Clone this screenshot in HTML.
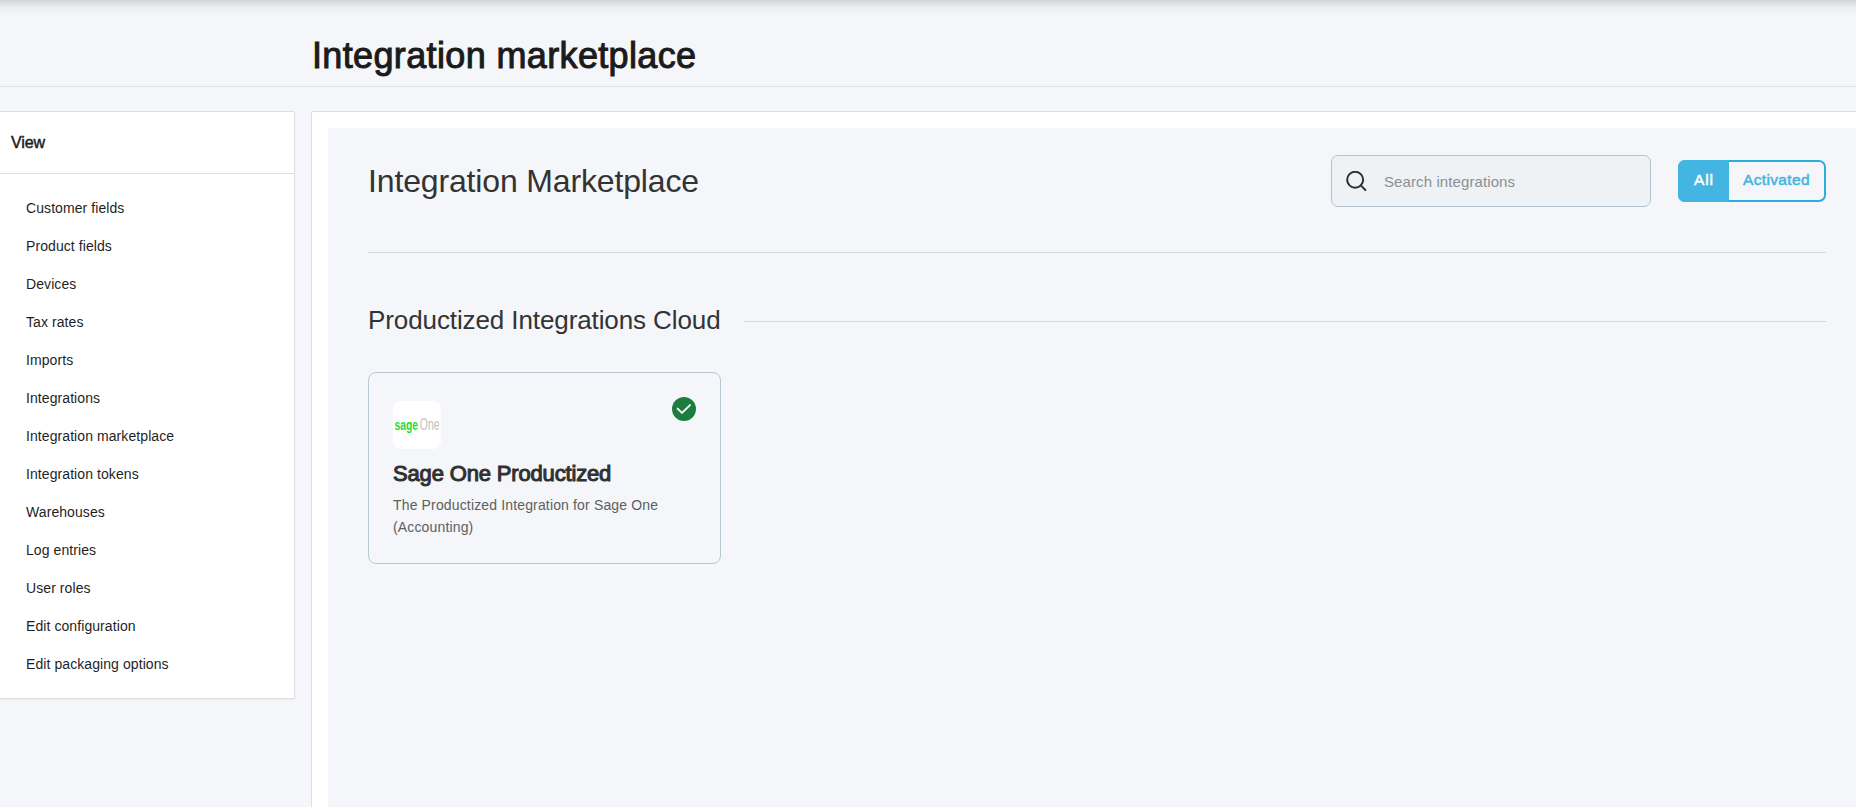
<!DOCTYPE html>
<html><head><meta charset="utf-8">
<style>
*{box-sizing:border-box;margin:0;padding:0}
html,body{width:1856px;height:807px;overflow:hidden}
body{background:#f4f6fa;font-family:"Liberation Sans",sans-serif;position:relative;color:#222}
.shadow{position:absolute;left:0;top:0;width:1856px;height:17px;background:linear-gradient(#d4d4d7 0px,#e2e3e7 4px,#eceef2 8px,#f1f3f7 12px,#f4f6fa 17px)}
.h1{position:absolute;left:312px;top:35px;font-size:36px;font-weight:normal;-webkit-text-stroke:1px #1b1b1b;color:#1b1b1b;white-space:nowrap;line-height:42px;letter-spacing:0.36px}
.hr1{position:absolute;left:0;top:86px;width:1856px;height:1px;background:#e1e2e4}
.side{position:absolute;left:-2px;top:111px;width:297px;height:588px;background:#fff;border:1px solid #dedede;border-radius:2px;box-shadow:0 1px 2px rgba(0,0,0,0.05)}
.view{position:absolute;left:11px;top:133px;font-size:16px;font-weight:normal;-webkit-text-stroke:0.45px #1b1b1b;color:#1b1b1b;line-height:20px;letter-spacing:-0.1px}
.sep{position:absolute;left:0;top:173px;width:294px;height:1px;background:#dedede}
.item{position:absolute;left:26px;margin-top:1px;font-size:14px;color:#1f1f1f;letter-spacing:0.08px;line-height:16px;white-space:nowrap}
.main{position:absolute;left:311px;top:111px;width:1600px;height:800px;background:#fff;border:1px solid #dedede;border-radius:2px}
.inner{position:absolute;left:328px;top:128px;width:1600px;height:700px;background:#f4f6fa}
.h2{position:absolute;left:368px;top:162px;font-size:32px;color:#333;white-space:nowrap;line-height:38px;letter-spacing:-0.15px}
.search{position:absolute;left:1331px;top:155px;width:320px;height:52px;background:#eff2f5;border:1px solid #b3c4ce;border-radius:7px}
.search .ph{position:absolute;left:52px;top:17px;font-size:15px;color:#8c8e90;letter-spacing:0.1px;line-height:18px;white-space:nowrap}
.tog{position:absolute;left:1678px;top:160px;width:148px;height:42px;border:2px solid #2badde;border-radius:7px;background:transparent;overflow:hidden}
.all{position:absolute;left:1678px;top:160px;width:51px;height:42px;background:#43b5e2;border-radius:7px 0 0 7px}
.btxt{position:absolute;top:170px;font-size:15.5px;line-height:20px;font-weight:normal;white-space:nowrap}
.hr2{position:absolute;left:368px;top:252px;width:1458px;height:1px;background:#d0d9df}
.h3{position:absolute;left:368px;top:305px;letter-spacing:-0.1px;font-size:26px;color:#333;white-space:nowrap;line-height:30px}
.hr3{position:absolute;left:744px;top:321px;width:1082px;height:1px;background:#d0d9df}
.card{position:absolute;left:368px;top:372px;width:353px;height:192px;border:1px solid #b8c9d2;border-radius:8px;background:#f4f6fa}
.logo{position:absolute;left:393px;top:401px;width:48px;height:48px;background:#fff;border-radius:8px}
.check{position:absolute;left:672px;top:397px;width:24px;height:24px}
.ctitle{position:absolute;left:393px;top:461px;letter-spacing:-0.16px;font-size:22px;font-weight:normal;-webkit-text-stroke:1.05px #313131;color:#313131;white-space:nowrap;line-height:26px}
.cdesc{position:absolute;left:393px;top:494px;letter-spacing:0.15px;font-size:14px;color:#5e5e5e;line-height:22px;width:300px}
</style></head><body>
<div class="shadow"></div>
<div class="h1">Integration marketplace</div>
<div class="hr1"></div>
<div class="side"></div>
<div class="view">View</div>
<div class="sep"></div>
<div class="item" style="top:199px">Customer fields</div>
<div class="item" style="top:237px">Product fields</div>
<div class="item" style="top:275px">Devices</div>
<div class="item" style="top:313px">Tax rates</div>
<div class="item" style="top:351px">Imports</div>
<div class="item" style="top:389px">Integrations</div>
<div class="item" style="top:427px">Integration marketplace</div>
<div class="item" style="top:465px">Integration tokens</div>
<div class="item" style="top:503px">Warehouses</div>
<div class="item" style="top:541px">Log entries</div>
<div class="item" style="top:579px">User roles</div>
<div class="item" style="top:617px">Edit configuration</div>
<div class="item" style="top:655px">Edit packaging options</div>
<div class="main"></div>
<div class="inner"></div>
<div class="h2">Integration Marketplace</div>
<div class="search">
<svg style="position:absolute;left:13px;top:15px" width="24" height="24" viewBox="0 0 24 24"><circle cx="10.15" cy="8.75" r="8" fill="none" stroke="#303030" stroke-width="2"/><path d="M15.8 14.4L20.4 19" stroke="#303030" stroke-width="2" stroke-linecap="round"/></svg>
<div class="ph">Search integrations</div>
</div>
<div class="tog"></div><div class="all"></div><div class="btxt" style="left:1694px;color:#fff;-webkit-text-stroke:0.5px #fff;letter-spacing:0.8px">All</div><div class="btxt" style="left:1743px;color:#43b5e2;-webkit-text-stroke:0.5px #43b5e2;letter-spacing:0.35px">Activated</div>
<div class="hr2"></div>
<div class="h3">Productized Integrations Cloud</div>
<div class="hr3"></div>
<div class="card"></div>
<svg class="logo" width="48" height="48" viewBox="0 0 48 48"><text x="1.5" y="29.2" font-family="Liberation Sans" font-weight="bold" font-size="15.5" fill="#25dc35" textLength="23.5" lengthAdjust="spacingAndGlyphs">sage</text><text x="26.8" y="29.2" font-family="Liberation Sans" font-size="16.5" fill="#c4c1c1" textLength="19.8" lengthAdjust="spacingAndGlyphs">One</text></svg>
<svg class="check" viewBox="0 0 24 24"><circle cx="12" cy="12" r="12" fill="#1d7d3e"/><path d="M5.6 11.6L10 15.9L18 8.1" fill="none" stroke="#fff" stroke-width="1.9" stroke-linecap="round" stroke-linejoin="round"/></svg>
<div class="ctitle">Sage One Productized</div>
<div class="cdesc">The Productized Integration for Sage One (Accounting)</div>
</body></html>
